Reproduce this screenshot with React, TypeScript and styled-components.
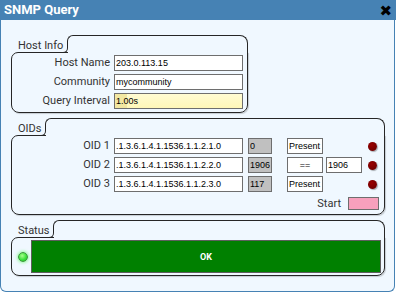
import React from "react";
import styled, { createGlobalStyle } from "styled-components";

const Global = createGlobalStyle`
  html, body { margin: 0; padding: 0; background: #ffffff; }
  body { font-family: Roboto, "Liberation Sans", sans-serif; }
`;

const BG = "#f0f8ff";
const LINE = "#262626";

const Window = styled.div`
  width: 396px;
  height: 292px;
  display: flex;
  flex-direction: column;
`;

const TitleBar = styled.div`
  height: 20px;
  flex-shrink: 0;
  background: #4682b4;
  display: flex;
  align-items: center;
  justify-content: space-between;
  padding: 0 4px 0 4px;
`;

const Title = styled.span`
  color: #ffffff;
  font: bold 13px Roboto, "Liberation Sans", sans-serif;
  line-height: 20px;
`;

const Close = styled.span`
  color: #000000;
  font: 15px "DejaVu Sans", sans-serif;
  line-height: 20px;
  margin-top: 1px;
`;

const Content = styled.div`
  flex: 1;
  margin-right: 1px;
  background: ${BG};
  border: 1px solid #4682b4;
  border-top: none;
  border-radius: 0 0 6px 6px;
  padding: 15px 9px 0 10px;
  display: flex;
  flex-direction: column;
  gap: 5px;
`;

const Group = styled.section<{ $width?: number }>`
  display: flex;
  flex-direction: column;
  width: ${(p) => (p.$width ? `${p.$width}px` : "auto")};
`;

const Head = styled.div`
  display: flex;
  height: 18px;
  margin-bottom: -1px;
  position: relative;
  z-index: 1;
`;

const Legend = styled.div`
  font-size: 11px;
  color: #333333;
  line-height: 13px;
  padding: 4px 0 0 7px;
  white-space: nowrap;
`;

const Notch = styled.div`
  position: relative;
  width: 10px;
  flex-shrink: 0;
  background: linear-gradient(to right, transparent 5px, ${BG} 5px);
  &::before {
    content: "";
    position: absolute;
    left: 4px;
    right: -1px;
    top: 0;
    height: 8px;
    border-top: 1px solid ${LINE};
    border-left: 1px solid ${LINE};
    border-top-left-radius: 6px;
  }
  &::after {
    content: "";
    position: absolute;
    left: 0;
    bottom: 0;
    width: 4px;
    height: 9px;
    border-bottom: 1px solid ${LINE};
    border-right: 1px solid ${LINE};
    border-bottom-right-radius: 6px;
  }
`;

const Filler = styled.div`
  flex: 1;
  background: ${BG};
  border-top: 1px solid ${LINE};
  border-right: 1px solid ${LINE};
  border-top-right-radius: 8px;
`;

const Body = styled.div`
  border: 1px solid ${LINE};
  border-radius: 7px 0 8px 8px;
  box-shadow: 1px 1px 1px rgba(0, 0, 0, 0.18);
`;

const FormGrid = styled(Body)`
  display: grid;
  grid-template-columns: 98px 129px;
  column-gap: 4px;
  row-gap: 3px;
  padding: 2px 4px 3px 0;
  align-items: center;
`;

const Label = styled.label`
  font-size: 11px;
  color: #333333;
  text-align: right;
  white-space: nowrap;
  line-height: 16px;
`;

const Field = styled.input<{ $w?: number; $tone?: "white" | "gray" | "yellow"; $center?: boolean }>`
  display: block;
  box-sizing: border-box;
  width: ${(p) => (p.$w ? `${p.$w}px` : "100%")};
  height: 16px;
  margin: 0;
  padding: 0 1px;
  border: 1px solid #6e6e6e;
  border-radius: 0;
  outline: none;
  font: 9px "Liberation Sans", Arial, sans-serif;
  color: #000000;
  text-align: ${(p) => (p.$center ? "center" : "left")};
  background: ${(p) =>
    p.$tone === "gray"
      ? "#c0c0c0"
      : p.$tone === "yellow"
      ? "linear-gradient(to right, #f2e7a2 0 12px, transparent 12px), linear-gradient(#fffbd2, #fff7b8)"
      : "#ffffff"};
`;

const OidBody = styled(Body)`
  display: flex;
  flex-direction: column;
  gap: 3px;
  padding: 2px 0 3px 0;
`;

const OidRow = styled.div`
  display: flex;
  align-items: center;
  height: 16px;
`;

const OidLabel = styled(Label)`
  width: 98px;
  flex-shrink: 0;
`;

const Cell = styled.div<{ $ml: number; $w: number }>`
  margin-left: ${(p) => p.$ml}px;
  width: ${(p) => p.$w}px;
  flex-shrink: 0;
`;

const Led = styled.span`
  display: block;
  margin-left: 6px;
  width: 9px;
  height: 9px;
  border-radius: 50%;
  background: radial-gradient(circle at 40% 35%, #9a0000 0, #780000 60%, #5a0000 100%);
  box-shadow: 1px 1px 1px rgba(0, 0, 0, 0.3);
`;

const StartRow = styled.div`
  display: flex;
  align-items: center;
  justify-content: flex-end;
  height: 16px;
  padding-right: 5px;
  gap: 7px;
`;

const StartLabel = styled.span`
  font-size: 11px;
  color: #333333;
`;

const StartBox = styled.span`
  display: block;
  box-sizing: border-box;
  width: 31px;
  height: 13px;
  background: #f7a0bc;
  border: 1px solid #6e6e6e;
`;

const StatusBody = styled(Body)`
  display: flex;
  align-items: center;
  padding: 2px 3px 2px 6px;
`;

const GreenLed = styled.span`
  display: block;
  width: 10px;
  height: 10px;
  box-sizing: border-box;
  border-radius: 50%;
  border: 1px solid #3a9a3a;
  background: radial-gradient(circle at 40% 35%, #a8ff8a 0, #3ee23e 55%, #22b822 100%);
  box-shadow: 0 0 3px 1px rgba(90, 255, 90, 0.55);
  flex-shrink: 0;
`;

const StatusBar = styled.div`
  flex: 1;
  margin-left: 3px;
  height: 33px;
  box-sizing: border-box;
  background: #008000;
  border: 1px solid #5e5e5e;
  display: flex;
  align-items: center;
  justify-content: center;
  color: #ffffff;
  font: bold 9px Roboto, "Liberation Sans", sans-serif;
`;

type Oid = { n: number; oid: string; value: string; cmp: string; ref?: string };

const oids: Oid[] = [
  { n: 1, oid: ".1.3.6.1.4.1.1536.1.1.2.1.0", value: "0", cmp: "Present" },
  { n: 2, oid: ".1.3.6.1.4.1.1536.1.1.2.2.0", value: "1906", cmp: "==", ref: "1906" },
  { n: 3, oid: ".1.3.6.1.4.1.1536.1.1.2.3.0", value: "117", cmp: "Present" },
];

function GroupHead({ title }: { title: string }) {
  return (
    <Head>
      <Legend>{title}</Legend>
      <Notch />
      <Filler />
    </Head>
  );
}

export default function App() {
  return (
    <>
      <Global />
      <Window>
        <TitleBar>
          <Title>SNMP Query</Title>
          <Close>✖</Close>
        </TitleBar>
        <Content>
          <Group $width={237}>
            <GroupHead title="Host Info" />
            <FormGrid>
              <Label>Host Name</Label>
              <Field readOnly value="203.0.113.15" />
              <Label>Community</Label>
              <Field readOnly value="mycommunity" />
              <Label>Query Interval</Label>
              <Field readOnly value="1.00s" $tone="yellow" />
            </FormGrid>
          </Group>

          <Group>
            <GroupHead title="OIDs" />
            <OidBody>
              {oids.map((o) => (
                <OidRow key={o.n}>
                  <OidLabel>OID {o.n}</OidLabel>
                  <Cell $ml={4} $w={129}>
                    <Field readOnly value={o.oid} />
                  </Cell>
                  <Cell $ml={5} $w={24}>
                    <Field readOnly value={o.value} $tone="gray" />
                  </Cell>
                  <Cell $ml={15} $w={36}>
                    <Field readOnly value={o.cmp} $center={o.cmp === "=="} />
                  </Cell>
                  <Cell $ml={3} $w={36}>
                    {o.ref !== undefined && <Field readOnly value={o.ref} />}
                  </Cell>
                  <Led />
                </OidRow>
              ))}
              <StartRow>
                <StartLabel>Start</StartLabel>
                <StartBox />
              </StartRow>
            </OidBody>
          </Group>

          <Group>
            <GroupHead title="Status" />
            <StatusBody>
              <GreenLed />
              <StatusBar>OK</StatusBar>
            </StatusBody>
          </Group>
        </Content>
      </Window>
    </>
  );
}
